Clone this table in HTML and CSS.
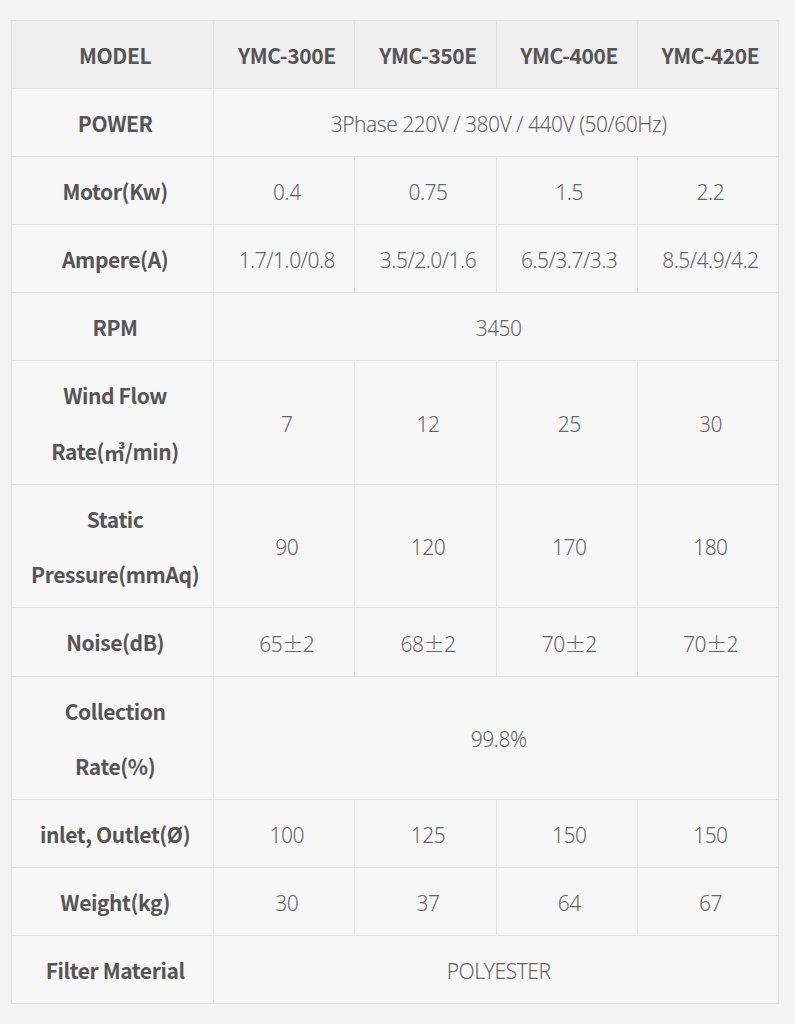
FILE: index.html
```html
<!DOCTYPE html>
<html lang="en">
<head>
<meta charset="utf-8">
<title>Spec Table</title>
<link rel="stylesheet" href="styles.css">
</head>
<body>
<div class="wrap">
<table class="spec">
  <colgroup>
    <col class="c-label"><col class="c-val"><col class="c-val"><col class="c-val"><col class="c-val">
  </colgroup>
  <thead>
    <tr class="head"><th>MODEL</th><th>YMC-300E</th><th>YMC-350E</th><th>YMC-400E</th><th>YMC-420E</th></tr>
  </thead>
  <tbody>
    <tr><th>POWER</th><td colspan="4">3Phase 220V / 380V / 440V (50/60Hz)</td></tr>
    <tr><th>Motor(Kw)</th><td>0.4</td><td>0.75</td><td>1.5</td><td>2.2</td></tr>
    <tr><th>Ampere(A)</th><td>1.7/1.0/0.8</td><td>3.5/2.0/1.6</td><td>6.5/3.7/3.3</td><td>8.5/4.9/4.2</td></tr>
    <tr><th>RPM</th><td colspan="4">3450</td></tr>
    <tr><th>Wind Flow<br>Rate(㎥/min)</th><td>7</td><td>12</td><td>25</td><td>30</td></tr>
    <tr><th>Static<br>Pressure(mmAq)</th><td>90</td><td>120</td><td>170</td><td>180</td></tr>
    <tr><th>Noise(dB)</th><td>65<span class="pm">±</span>2</td><td>68<span class="pm">±</span>2</td><td>70<span class="pm">±</span>2</td><td>70<span class="pm">±</span>2</td></tr>
    <tr><th>Collection<br>Rate(%)</th><td colspan="4">99.8%</td></tr>
    <tr><th>inlet, Outlet(Ø)</th><td>100</td><td>125</td><td>150</td><td>150</td></tr>
    <tr><th>Weight(kg)</th><td>30</td><td>37</td><td>64</td><td>67</td></tr>
    <tr><th>Filter Material</th><td colspan="4">POLYESTER</td></tr>
  </tbody>
</table>
</div>
</body>
</html>
```

FILE: styles.css
```css
html, body {
  margin: 0;
  padding: 0;
  background: #f4f4f4;
}
.wrap {
  padding: 20px 0 0 11px;
}
.spec {
  border-collapse: collapse;
  width: 768px;
  table-layout: fixed;
  background: #f7f7f7;
  border: 1px solid #d6d6d6;
  font-family: "Noto Sans CJK KR", "Noto Sans", sans-serif;
  color: #666;
  box-shadow: 0 1px 2px rgba(0,0,0,0.06);
}
.c-label { width: 202px; }
.c-val { width: 141px; }
.spec th, .spec td {
  border: 1px solid #e2e2e2;
  text-align: center;
  vertical-align: middle;
  padding: 7px 0 5px 5px;
  line-height: 55.1px;
}
.spec th {
  font-size: 21px;
  font-weight: 700;
  letter-spacing: -0.4px;
  color: #555;
}
.spec td {
  padding-top: 8px;
  padding-bottom: 4px;
  font-family: "Noto Sans", "Noto Sans CJK KR", sans-serif;
  font-size: 21px;
  font-weight: 300;
  letter-spacing: -0.5px;
  color: #666;
}
.spec td .pm {
  font-family: "Noto Sans CJK KR", sans-serif;
  font-weight: 300;
}
.head th {
  background: #efefef;
}
```
